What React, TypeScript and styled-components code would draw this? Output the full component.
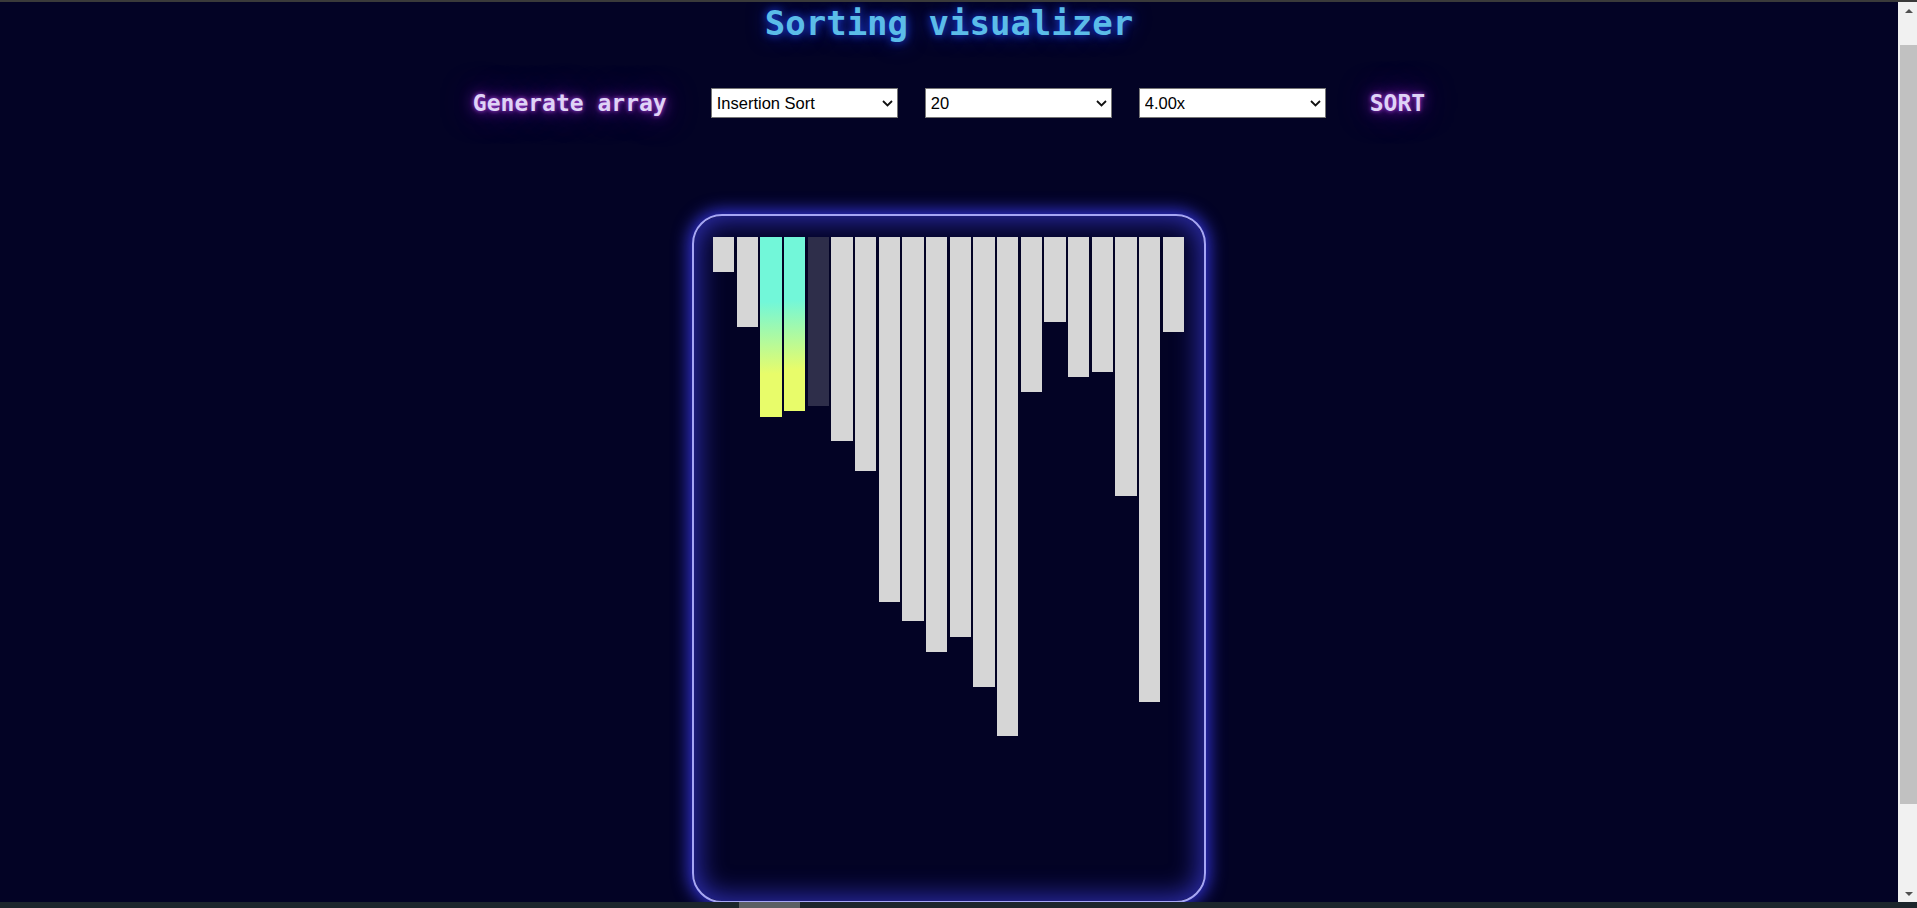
import React from "react";
import styled, { createGlobalStyle, css } from "styled-components";

const GlobalStyle = createGlobalStyle`
  html, body {
    margin: 0;
    padding: 0;
    height: 100%;
    overflow: hidden;
    background: #030325;
  }
  #root { height: 100%; }
  * { box-sizing: border-box; }
`;

const Frame = styled.div`
  width: 100vw;
  height: 100vh;
  display: flex;
  flex-direction: column;
  overflow: hidden;
`;

const TopLine = styled.div`
  height: 2px;
  flex-shrink: 0;
  background: #3a3a3a;
`;

const Middle = styled.div`
  flex: 1;
  display: flex;
  min-height: 0;
`;

const Main = styled.main`
  flex: 1;
  min-width: 0;
  display: flex;
  flex-direction: column;
  align-items: center;
  overflow: hidden;
  background: #030325;
`;

const Title = styled.h1`
  margin: 0;
  padding-top: 1px;
  font-family: "DejaVu Sans Mono", "Liberation Mono", monospace;
  font-weight: bold;
  font-size: 34px;
  line-height: 40px;
  color: #5bbce8;
  text-shadow: 0 0 8px #1c3fe0, 0 0 20px #14249e;
`;

const Controls = styled.div`
  display: flex;
  align-items: center;
  gap: 27px;
  height: 30px;
  margin-top: 45px;
  flex-shrink: 0;
`;

const GlowButton = styled.button`
  background: none;
  border: none;
  padding: 0 17px;
  height: 30px;
  cursor: pointer;
  font-family: "DejaVu Sans Mono", "Liberation Mono", monospace;
  font-weight: bold;
  font-size: 23px;
  line-height: 30px;
  color: #dfd3f6;
  text-shadow: 0 0 4px #a33fd6, 0 0 14px #8424b8, 0 0 32px #5a1490;
`;

const SelectWrap = styled.div`
  position: relative;
  width: 187px;
  height: 30px;
`;

const Select = styled.select`
  appearance: none;
  -webkit-appearance: none;
  width: 100%;
  height: 100%;
  padding: 0 24px 0 5px;
  font-family: "Liberation Sans", Arial, sans-serif;
  font-size: 16.5px;
  color: #000;
  background: #fff;
  border: 1px solid #767676;
  border-radius: 0;
  outline: none;
`;

const Chevron = styled.svg`
  position: absolute;
  right: 5px;
  top: 50%;
  width: 11px;
  height: 7px;
  margin-top: -3px;
  pointer-events: none;
`;

const Board = styled.div`
  width: 514px;
  height: 689px;
  flex-shrink: 0;
  margin-top: 96px;
  padding: 21px 20px 0 19px;
  border: 2px solid #a6a6f4;
  border-radius: 30px;
  box-shadow: 0 0 16px 4px #3030c8, inset 0 0 26px 5px #2c2ca8;
  display: flex;
  align-items: flex-start;
  gap: 2.45px;
  background: #030325;
`;

type BarState = "idle" | "compare" | "pending";

const Bar = styled.div<{ $state: BarState }>`
  flex: 1;
  ${({ $state }) =>
    $state === "compare"
      ? css`
          background: linear-gradient(180deg, #72f7d9 36%, #e8fc6a 76%);
        `
      : $state === "pending"
      ? css`
          background: #2e2e4a;
        `
      : css`
          background: #d6d6d6;
        `}
`;

const Scrollbar = styled.div`
  width: 19px;
  flex-shrink: 0;
  background: #f1f1f1;
  display: flex;
  flex-direction: column;
`;

const ArrowButton = styled.div<{ $down?: boolean }>`
  height: 17px;
  flex-shrink: 0;
  display: flex;
  align-items: center;
  justify-content: center;
  padding-left: 2px;
  &::before {
    content: "";
    width: 0;
    height: 0;
    border-left: 4.5px solid transparent;
    border-right: 4.5px solid transparent;
    ${({ $down }) =>
      $down
        ? css`
            border-top: 4.5px solid #505050;
          `
        : css`
            border-bottom: 4.5px solid #505050;
          `}
  }
`;

const Track = styled.div`
  flex: 1;
  display: flex;
  flex-direction: column;
`;

const Thumb = styled.div`
  margin-top: 26px;
  margin-left: 2px;
  height: 759px;
  background: #c1c1c1;
`;

const BottomStrip = styled.div`
  height: 6px;
  flex-shrink: 0;
  background: #1c262c;
  display: flex;
`;

const BottomThumb = styled.div`
  margin-left: 739px;
  width: 61px;
  background: #5b5f63;
`;

const BARS = [35, 90, 180, 174, 169, 204, 234, 365, 384, 415, 400, 450, 499, 155, 85, 140, 135, 259, 465, 95];

const stateFor = (i: number): BarState => (i === 2 || i === 3 ? "compare" : i === 4 ? "pending" : "idle");

function Dropdown({ value, options }: { value: string; options: [string, string][] }) {
  return (
    <SelectWrap>
      <Select defaultValue={value}>
        {options.map(([v, label]) => (
          <option key={v} value={v}>
            {label}
          </option>
        ))}
      </Select>
      <Chevron viewBox="0 0 11 7">
        <path d="M1 1 L5.5 5.5 L10 1" fill="none" stroke="#111" strokeWidth="1.8" />
      </Chevron>
    </SelectWrap>
  );
}

export default function App() {
  return (
    <>
      <GlobalStyle />
      <Frame>
        <TopLine />
        <Middle>
          <Main>
            <Title>Sorting visualizer</Title>
            <Controls>
              <GlowButton>Generate array</GlowButton>
              <Dropdown
                value="insertion"
                options={[
                  ["bubble", "Bubble Sort"],
                  ["selection", "Selection Sort"],
                  ["insertion", "Insertion Sort"],
                  ["merge", "Merge Sort"],
                  ["quick", "Quick Sort"],
                  ["heap", "Heap Sort"],
                ]}
              />
              <Dropdown
                value="20"
                options={[
                  ["10", "10"],
                  ["20", "20"],
                  ["30", "30"],
                  ["50", "50"],
                  ["100", "100"],
                ]}
              />
              <Dropdown
                value="4"
                options={[
                  ["0.25", "0.25x"],
                  ["0.5", "0.50x"],
                  ["1", "1.00x"],
                  ["2", "2.00x"],
                  ["4", "4.00x"],
                ]}
              />
              <GlowButton>SORT</GlowButton>
            </Controls>
            <Board>
              {BARS.map((h, i) => (
                <Bar key={i} $state={stateFor(i)} style={{ height: `${h}px` }} />
              ))}
            </Board>
          </Main>
          <Scrollbar>
            <ArrowButton />
            <Track>
              <Thumb />
            </Track>
            <ArrowButton $down />
          </Scrollbar>
        </Middle>
        <BottomStrip>
          <BottomThumb />
        </BottomStrip>
      </Frame>
    </>
  );
}
